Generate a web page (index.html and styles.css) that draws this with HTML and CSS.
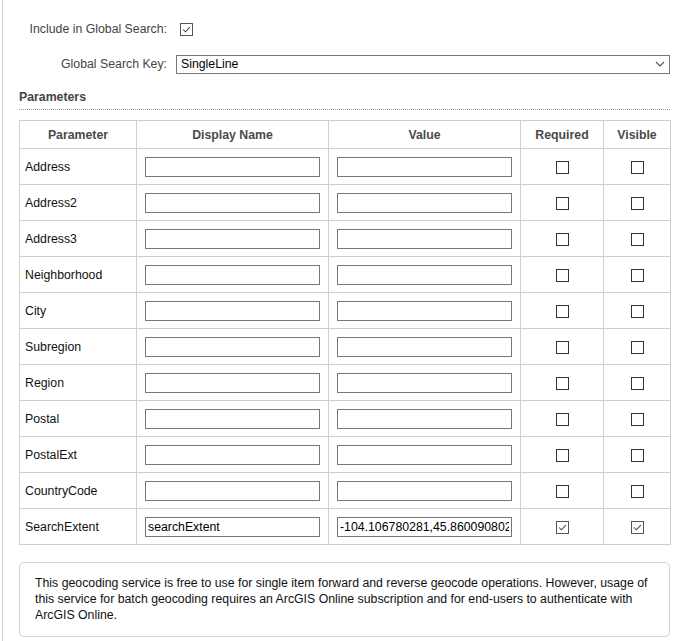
FILE: index.html
```html
<!DOCTYPE html>
<html lang="en">
<head>
<meta charset="utf-8">
<title>Geocode Service Settings</title>
<link rel="stylesheet" href="styles.css">
</head>
<body>
<div class="panel">
  <div class="form-row">
    <label class="form-label">Include in Global Search:</label>
    <span class="cb on cb-top"><svg viewBox="0 0 13 13"><path d="M2.5 6.5 L5.2 9.2 L10.5 3.6"/></svg></span>
  </div>
  <div class="form-row">
    <label class="form-label">Global Search Key:</label>
    <div class="select">
      <span>SingleLine</span>
      <svg class="chev" viewBox="0 0 10 6"><path d="M1 1 L5 5 L9 1"/></svg>
    </div>
  </div>

  <h3 class="section">Parameters</h3>

  <table class="params">
    <colgroup>
      <col class="c-param"><col class="c-name"><col class="c-value"><col class="c-req"><col class="c-vis">
    </colgroup>
    <thead>
      <tr><th>Parameter</th><th>Display Name</th><th>Value</th><th>Required</th><th>Visible</th></tr>
    </thead>
    <tbody>
      <tr><td class="pname">Address</td><td><input class="txt" type="text"></td><td><input class="txt" type="text"></td><td class="ck"><span class="cb"></span></td><td class="ck"><span class="cb"></span></td></tr>
      <tr><td class="pname">Address2</td><td><input class="txt" type="text"></td><td><input class="txt" type="text"></td><td class="ck"><span class="cb"></span></td><td class="ck"><span class="cb"></span></td></tr>
      <tr><td class="pname">Address3</td><td><input class="txt" type="text"></td><td><input class="txt" type="text"></td><td class="ck"><span class="cb"></span></td><td class="ck"><span class="cb"></span></td></tr>
      <tr><td class="pname">Neighborhood</td><td><input class="txt" type="text"></td><td><input class="txt" type="text"></td><td class="ck"><span class="cb"></span></td><td class="ck"><span class="cb"></span></td></tr>
      <tr><td class="pname">City</td><td><input class="txt" type="text"></td><td><input class="txt" type="text"></td><td class="ck"><span class="cb"></span></td><td class="ck"><span class="cb"></span></td></tr>
      <tr><td class="pname">Subregion</td><td><input class="txt" type="text"></td><td><input class="txt" type="text"></td><td class="ck"><span class="cb"></span></td><td class="ck"><span class="cb"></span></td></tr>
      <tr><td class="pname">Region</td><td><input class="txt" type="text"></td><td><input class="txt" type="text"></td><td class="ck"><span class="cb"></span></td><td class="ck"><span class="cb"></span></td></tr>
      <tr><td class="pname">Postal</td><td><input class="txt" type="text"></td><td><input class="txt" type="text"></td><td class="ck"><span class="cb"></span></td><td class="ck"><span class="cb"></span></td></tr>
      <tr><td class="pname">PostalExt</td><td><input class="txt" type="text"></td><td><input class="txt" type="text"></td><td class="ck"><span class="cb"></span></td><td class="ck"><span class="cb"></span></td></tr>
      <tr><td class="pname">CountryCode</td><td><input class="txt" type="text"></td><td><input class="txt" type="text"></td><td class="ck"><span class="cb"></span></td><td class="ck"><span class="cb"></span></td></tr>
      <tr><td class="pname">SearchExtent</td><td><input class="txt" type="text" value="searchExtent"></td><td><input class="txt" type="text" value="-104.106780281,45.860090802,-96.554411,49.000692"></td><td class="ck"><span class="cb on"><svg viewBox="0 0 13 13"><path d="M2.5 6.5 L5.2 9.2 L10.5 3.6"/></svg></span></td><td class="ck"><span class="cb on"><svg viewBox="0 0 13 13"><path d="M2.5 6.5 L5.2 9.2 L10.5 3.6"/></svg></span></td></tr>
    </tbody>
  </table>

  <div class="note">
    This geocoding service is free to use for single item forward and reverse geocode operations. However, usage of this service for batch geocoding requires an ArcGIS Online subscription and for end-users to authenticate with ArcGIS Online.
  </div>
</div>
</body>
</html>
```

FILE: styles.css
```css
html, body {
  margin: 0;
  padding: 0;
  background: #fff;
}

body {
  font-family: "Liberation Sans", Arial, sans-serif;
  font-size: 12.3px;
  color: #222;
}

.panel {
  margin-left: 2px;
  border-left: 1px solid #d0d0d0;
  min-height: 641px;
  box-sizing: border-box;
  padding: 19px 4px 0 16px;
}

/* labelled rows above the table */
.form-row {
  display: grid;
  grid-template-columns: 148px 1fr;
  column-gap: 9px;
  align-items: center;
  height: 20px;
}
.form-row + .form-row {
  margin-top: 15px;
}
.form-label {
  text-align: right;
  color: #444;
  line-height: 16px;
}

.select {
  display: flex;
  align-items: center;
  justify-content: space-between;
  height: 19px;
  box-sizing: border-box;
  border: 1px solid #767676;
  padding: 0 4px 0 4px;
  color: #000;
}
.chev {
  width: 10px;
  height: 6px;
  fill: none;
  stroke: #555;
  stroke-width: 1.2;
}

/* checkboxes */
.cb {
  display: inline-block;
  width: 13px;
  height: 13px;
  box-sizing: border-box;
  border: 1px solid #333;
  background: #fff;
  vertical-align: middle;
}
.cb.on {
  border-color: #555;
}
.cb svg {
  display: block;
  width: 11px;
  height: 11px;
  fill: none;
  stroke: #444;
  stroke-width: 1.2;
}
.cb-top {
  margin-left: 4px;
}

.section {
  margin: 15px 0 0;
  padding-bottom: 4px;
  border-bottom: 1px dotted #9a9a9a;
  font-size: 12.3px;
  line-height: 16px;
  font-weight: bold;
  color: #444;
}

/* parameter grid */
.params {
  margin-top: 10px;
  width: 651px;
  border-collapse: collapse;
  table-layout: fixed;
}
.c-param { width: 117px; }
.c-name { width: 192px; }
.c-value { width: 192px; }
.c-req { width: 83px; }
.c-vis { width: 67px; }

.params th,
.params td {
  border: 1px solid #cfcfcf;
  padding: 0 8px;
}
.params th {
  height: 27px;
  font-weight: bold;
  color: #4a4a4a;
  text-align: center;
}
.params td {
  height: 35px;
}
.params td.pname {
  height: 34px;
  padding: 1px 0 0 5px;
  color: #111;
}
.params td.ck {
  text-align: center;
  padding: 0;
}

.txt {
  display: block;
  width: 100%;
  height: 20px;
  box-sizing: border-box;
  margin: 0;
  border: 1px solid #767676;
  border-radius: 0;
  padding: 1px 2px 0;
  font-family: "Liberation Sans", Arial, sans-serif;
  font-size: 12.3px;
  color: #000;
  background: #fff;
  outline: none;
}

/* service usage note */
.note {
  margin-top: 17px;
  border: 1px solid #d0d0d0;
  border-radius: 5px;
  padding: 12px 10px 13px 15px;
  line-height: 16px;
  color: #111;
}
```
